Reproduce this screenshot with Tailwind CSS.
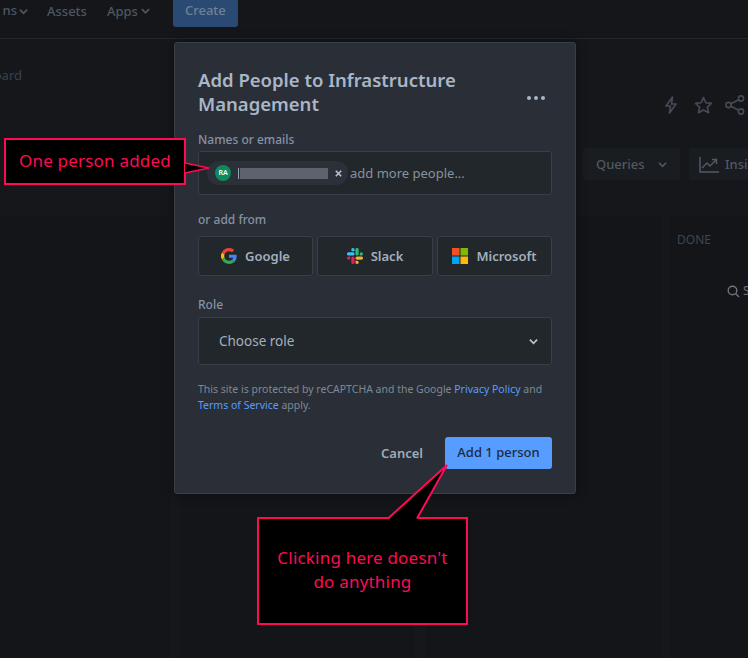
<!DOCTYPE html>
<html lang="en">
<head>
    <meta charset="UTF-8">
    <title>Add People</title>
    <script src="https://cdn.jsdelivr.net/npm/@tailwindcss/browser@4"></script>
</head>
<body class="bg-[#15171b] font-['Noto_Sans',sans-serif] overflow-hidden">
    <div class="relative w-[748px] h-[658px] overflow-hidden">

        <!-- top nav -->
        <div class="h-[39px] border-b border-[#22262b] bg-[#14161a] flex items-start text-[13px] font-medium text-[#4e5661]">
            <div class="w-[28px] overflow-hidden flex justify-end items-center h-[22px] whitespace-nowrap">
                <span>ns</span>
                <svg class="w-[9px] h-[9px] ml-[2px] shrink-0" viewBox="0 0 10 10" fill="none" stroke="#4e5661" stroke-width="2"><path d="M1 3l4 4 4-4"/></svg>
            </div>
            <span class="ml-[19px] leading-[22px]">Assets</span>
            <span class="ml-[20px] leading-[22px]">Apps</span>
            <svg class="w-[9px] h-[22px] ml-[3px]" viewBox="0 0 10 24" fill="none" stroke="#4e5661" stroke-width="2"><path d="M1 10l4 4 4-4"/></svg>
            <div class="ml-[23px] w-[65px] h-[27px] bg-[#2a4a73] rounded-b-[3px] text-[#6f8196] flex items-center justify-center pb-[5px]">Create</div>
        </div>

        <!-- board behind the modal -->
        <div class="absolute left-0 top-[66px] text-[13px] text-[#3c424b] w-[22px] overflow-hidden flex justify-end">oard</div>
        <div class="absolute left-0 top-[216px] w-[170px] h-[442px] bg-[#131519] rounded-tr-[3px]"></div>
        <div class="absolute left-[180px] top-[216px] w-[234px] h-[442px] bg-[#131519]"></div>
        <div class="absolute left-[426px] top-[216px] w-[235px] h-[442px] bg-[#131519] rounded-t-[3px]"></div>
        <div class="absolute left-[670px] top-[216px] w-[78px] h-[442px] bg-[#131519] rounded-tl-[3px]">
            <div class="pl-[7px] pt-[15px] text-[12px] text-[#3f4650]">DONE</div>
            <div class="absolute left-[57px] top-[66px] flex items-center gap-[3px] text-[12px] text-[#6b7480]">
                <svg class="w-[13px] h-[13px]" viewBox="0 0 13 13" fill="none" stroke="#6b7480" stroke-width="1.4"><circle cx="5.5" cy="5.5" r="4.3"/><path d="M8.8 8.8L12 12"/></svg>
                <span>S</span>
            </div>
        </div>

        <!-- toolbar icons -->
        <div class="absolute left-[663px] top-[95px] flex items-center">
            <svg class="w-[16px] h-[18px]" viewBox="0 0 16 18" fill="none" stroke="#454b54" stroke-width="1.7" stroke-linejoin="round"><path d="M9.5 1L3 10h4.5L6.5 17 13 8H8.5z"/></svg>
            <svg class="w-[19px] h-[18px] ml-[15px]" viewBox="0 0 24 23" fill="none" stroke="#454b54" stroke-width="2.1" stroke-linejoin="round"><path d="M12 2l3 6.6 7.2.8-5.3 4.9 1.5 7.1L12 17.8l-6.4 3.6 1.5-7.1L1.800 9.400 9 8.600z"/></svg>
            <svg class="w-[20px] h-[20px] ml-[12px]" viewBox="0 0 20 20" fill="none" stroke="#454b54" stroke-width="1.600"><circle cx="16" cy="3.500" r="2.600"/><circle cx="3.500" cy="10" r="2.600"/><circle cx="16" cy="16.500" r="2.600"/><path d="M6 8.700l7.600-4M6 11.300l7.600 4"/></svg>
        </div>
        <div class="absolute left-[583px] top-[148px] w-[97px] h-[32px] bg-[#191c20] rounded-[3px] flex items-center pl-[13px] pt-[1px] text-[13px] font-medium text-[#515963]">
            Queries
            <svg class="w-[9px] h-[9px] ml-[13px]" viewBox="0 0 10 10" fill="none" stroke="#515963" stroke-width="1.800"><path d="M1 3l4 4 4-4"/></svg>
        </div>
        <div class="absolute left-[689px] top-[148px] w-[59px] h-[32px] bg-[#191c20] rounded-l-[3px] flex items-center pl-[10px] pt-[1px] text-[13px] font-medium text-[#515963] overflow-hidden whitespace-nowrap">
            <svg class="w-[20px] h-[16px] mr-[6px] shrink-0" viewBox="0 0 20 16" fill="none" stroke="#515963" stroke-width="1.500"><path d="M1 0v15h19"/><path d="M3 11l5-5 3 3 6-6M13 2.500h4.500V7"/></svg>
            Insights
        </div>

        <!-- modal -->
        <div class="absolute left-[174px] top-[42px] w-[402px] h-[452px] bg-[#2a2e36] border border-[#3a3f47] rounded-[3px] pl-[23px] pr-[23px] pt-[25px] shadow-[0_0_12px_rgba(0,0,0,0.4)]">
            <div class="flex items-end justify-between">
                <h1 class="w-[300px] text-[18.5px] leading-[24px] font-semibold text-[#a9b6c6]">Add People to Infrastructure Management</h1>
                <svg class="w-[20px] h-[6px] mb-[15px] mr-[6px]" viewBox="0 0 20 6" fill="#a9b6c6"><circle cx="3" cy="3" r="2"/><circle cx="10" cy="3" r="2"/><circle cx="17" cy="3" r="2"/></svg>
            </div>

            <div class="mt-[16px] text-[12px] leading-[16px] font-medium text-[#8592a3]">Names or emails</div>
            <div class="mt-[3px] h-[44px] bg-[#22272b] border border-[#3a3f47] rounded-[3px] flex items-center pl-[8px]">
                <div class="w-[141px] h-[24px] bg-[#2c3139] rounded-full flex items-center pl-[8px] shrink-0">
                    <div class="w-[16px] h-[16px] rounded-full bg-[#0d8a5e] text-white text-[7px] font-semibold flex items-center justify-center">RA</div>
                    <div class="ml-[7px] w-[1px] h-[11px] bg-[#9aa3ad]"></div>
                    <div class="w-[88px] h-[11px] ml-[1px] bg-[#5c636d]"></div>
                    <svg class="w-[7px] h-[7px] ml-[7px]" viewBox="0 0 7 7" stroke="#b9c2cc" stroke-width="1.600"><path d="M.8.800l5.400 5.400M6.200.800L.8 6.200"/></svg>
                </div>
                <span class="ml-[2px] pt-[1px] text-[13px] text-[#87929f]">add more people...</span>
            </div>

            <div class="mt-[17px] text-[12px] leading-[16px] font-medium text-[#8592a3]">or add from</div>
            <div class="mt-[8px] flex gap-[4px] text-[13px] font-semibold text-[#a3afbd]">
                <div class="w-[115px] h-[40px] bg-[#22272b] border border-[#3a3f47] rounded-[3px] flex items-center justify-center gap-[8px]">
                    <svg class="w-[16px] h-[16px]" viewBox="0 0 48 48"><path fill="#EA4335" d="M24 9.500c3.500 0 6.700 1.300 9.100 3.500l6.800-6.800C35.900 2.400 30.500 0 24 0 14.600 0 6.500 5.400 2.600 13.200l7.900 6.200C12.400 13.700 17.700 9.500 24 9.500z"/><path fill="#4285F4" d="M47 24.500c0-1.600-.1-3.100-.4-4.500H24v9h12.900c-.6 3-2.200 5.500-4.700 7.200l7.700 6C44.400 38 47 31.900 47 24.500z"/><path fill="#FBBC05" d="M10.500 28.600c-.5-1.500-.8-3-.8-4.600s.3-3.200.8-4.600l-7.900-6.200C.9 16.500 0 20.100 0 24s.9 7.500 2.600 10.800l7.900-6.200z"/><path fill="#34A853" d="M24 48c6.500 0 11.900-2.100 15.900-5.800l-7.700-6c-2.200 1.400-4.900 2.300-8.200 2.300-6.300 0-11.600-4.200-13.500-9.900l-7.900 6.200C6.500 42.600 14.600 48 24 48z"/></svg>
                    <span class="pt-[1px]">Google</span>
                </div>
                <div class="w-[116px] h-[40px] bg-[#22272b] border border-[#3a3f47] rounded-[3px] flex items-center justify-center gap-[8px]">
                    <svg class="w-[16px] h-[16px]" viewBox="0 0 16 16">
                        <path fill="#36C5F0" d="M5.900 0a1.600 1.600 0 000 3.300h1.600V1.600A1.600 1.600 0 005.900 0zM5.900 4.300H1.600a1.600 1.600 0 000 3.300h4.300a1.600 1.600 0 000-3.300z"/>
                        <path fill="#2EB67D" d="M16 5.900a1.600 1.600 0 00-3.300 0v1.600h1.700A1.600 1.600 0 0016 5.900zM11.700 5.900V1.600a1.600 1.600 0 00-3.300 0v4.300a1.600 1.600 0 003.300 0z"/>
                        <path fill="#ECB22E" d="M10.100 16a1.600 1.600 0 000-3.300H8.500v1.700a1.600 1.600 0 001.600 1.600zM10.100 11.700h4.300a1.600 1.600 0 000-3.300h-4.300a1.600 1.600 0 000 3.300z"/>
                        <path fill="#E01E5A" d="M0 10.100a1.600 1.600 0 003.300 0V8.500H1.600A1.600 1.600 0 000 10.100zM4.300 10.100v4.300a1.600 1.600 0 003.300 0v-4.300a1.600 1.600 0 00-3.300 0z"/>
                    </svg>
                    <span class="pt-[1px]">Slack</span>
                </div>
                <div class="w-[115px] h-[40px] bg-[#22272b] border border-[#3a3f47] rounded-[3px] flex items-center justify-center gap-[8px]">
                    <svg class="w-[16px] h-[16px]" viewBox="0 0 16 16"><rect width="7.500" height="7.500" fill="#F25022"/><rect x="8.500" width="7.500" height="7.500" fill="#7FBA00"/><rect y="8.500" width="7.500" height="7.500" fill="#00A4EF"/><rect x="8.500" y="8.500" width="7.500" height="7.500" fill="#FFB900"/></svg>
                    <span class="pt-[1px]">Microsoft</span>
                </div>
            </div>

            <div class="mt-[21px] text-[12px] leading-[16px] font-medium text-[#8592a3]">Role</div>
            <div class="mt-[4px] h-[48px] bg-[#22272b] border border-[#3a3f47] rounded-[3px] flex items-center justify-between pl-[20px] pr-[13px] text-[13.500px] text-[#a3afbd]">
                Choose role
                <svg class="w-[9px] h-[9px]" viewBox="0 0 10 10" fill="none" stroke="#b9c2cc" stroke-width="2"><path d="M1 3l4 4 4-4"/></svg>
            </div>

            <p class="mt-[16px] text-[10.500px] leading-[16px] text-[#7e8995]">This site is protected by reCAPTCHA and the Google <span class="text-[#579dff]">Privacy Policy</span> and<br><span class="text-[#579dff]">Terms of Service</span> apply.</p>

            <div class="mt-[24px] flex justify-end items-center">
                <span class="text-[13px] font-semibold text-[#9fabb9] mr-[22px] pt-[1px]">Cancel</span>
                <div class="w-[107px] h-[32px] bg-[#579dff] rounded-[3px] text-[13px] font-medium text-[#1d2b3d] flex items-center justify-center">Add 1 person</div>
            </div>
        </div>

        <!-- annotation: one person added -->
        <div class="absolute left-[4px] top-[138px] w-[182px] h-[47px] bg-black border-2 border-[#ff0a54] flex items-center pl-[13px] pb-[1px] text-[17px] text-[#ff0a54] tracking-[0.2px]">One person added</div>
        <svg class="absolute left-[184px] top-[160px] w-[26px] h-[18px]" viewBox="0 0 26 18"><path d="M1 3l24 5-24 5" fill="#000" stroke="#ff0a54" stroke-width="1.500"/></svg>

        <!-- annotation: button -->
        <div class="absolute left-[257px] top-[517px] w-[211px] h-[108px] border-2 border-[#ff0a54] flex items-center justify-center text-center px-[18px] pb-[2px] text-[17px] leading-[24px] text-[#ff0a54] tracking-[0.2px] bg-black">Clicking here doesn't do anything</div>
        <svg class="absolute left-[380px] top-[460px] w-[80px] h-[62px]" viewBox="0 0 80 62"><path d="M8 60L67 5 37 60z" fill="#000"/><path d="M8 58.500L67 5 37 58.500" fill="none" stroke="#ff0a54" stroke-width="2"/></svg>
    </div>
</body>
</html>
